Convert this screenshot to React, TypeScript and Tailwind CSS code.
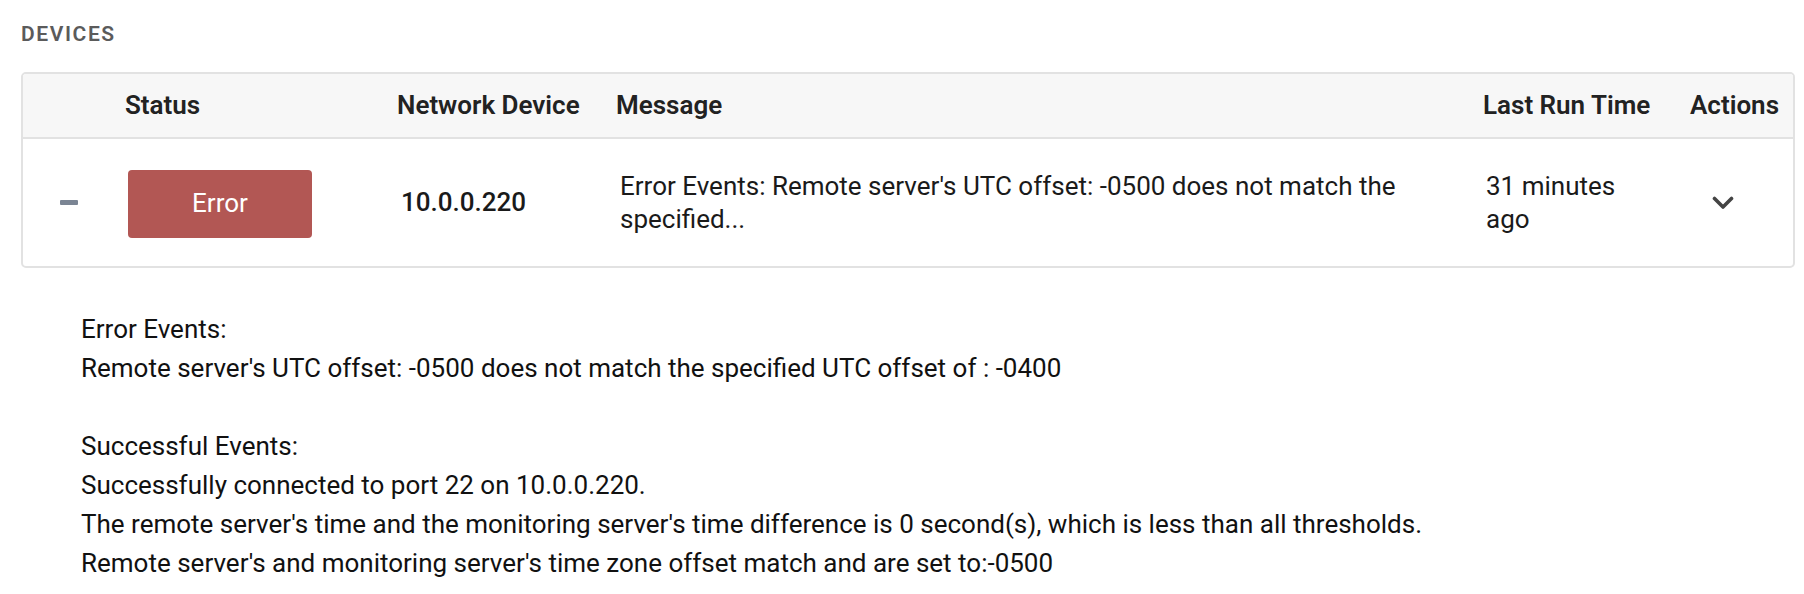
import React from "react";

type Device = {
  status: string;
  address: string;
  message: string;
  lastRun: string;
};

const device: Device = {
  status: "Error",
  address: "10.0.0.220",
  message: "Error Events: Remote server's UTC offset: -0500 does not match the specified...",
  lastRun: "31 minutes ago",
};

const detailLines = [
  "Error Events:",
  "Remote server's UTC offset: -0500 does not match the specified UTC offset of : -0400",
  "",
  "Successful Events:",
  "Successfully connected to port 22 on 10.0.0.220.",
  "The remote server's time and the monitoring server's time difference is 0 second(s), which is less than all thresholds.",
  "Remote server's and monitoring server's time zone offset match and are set to:-0500",
];

const cols = "grid grid-cols-[87px_272px_219px_867px_207px_1fr]";

function ChevronDown() {
  return (
    <svg width="22" height="14" viewBox="0 0 22 14" fill="none" aria-hidden="true">
      <path d="M2.5 2.5 L11 11 L19.5 2.5" stroke="#444444" strokeWidth="3.6" strokeLinecap="round" strokeLinejoin="round" />
    </svg>
  );
}

export default function App() {
  return (
    <div className="w-[1804px] h-[594px] bg-white px-[21px] pt-[22px] text-[#1f1f1f] font-['Roboto',sans-serif]">
      <h2 className="text-[21px] leading-[24px] font-semibold tracking-[1.6px] text-[#5b5b5b]">DEVICES</h2>

      <div className="mt-[26px] w-[1774px] border-2 border-[#e2e2e2] rounded-[5px] overflow-hidden">
        <div className={`${cols} h-[65px] items-center bg-[#f7f7f7] border-b-2 border-[#e2e2e2] text-[26px] font-semibold text-[#222]`}>
          <div />
          <div className="pl-[15px]">Status</div>
          <div className="pl-[15px]">Network Device</div>
          <div className="pl-[15px]">Message</div>
          <div className="pl-[15px]">Last Run Time</div>
          <div className="pl-[15px]">Actions</div>
        </div>

        <div className={`${cols} h-[127px] items-center text-[26px] text-[#1a1a1a]`}>
          <div className="flex justify-center pl-[4px]">
            <span className="block w-[18px] h-[5px] rounded-[1px] bg-[#7b8594]" />
          </div>
          <div className="pl-[18px] pt-[2px]">
            <span className="flex items-center justify-center w-[184px] h-[68px] rounded-[4px] bg-[#b25754] text-white">
              {device.status}
            </span>
          </div>
          <div className="pl-[19px] font-medium">{device.address}</div>
          <div className="pl-[19px] pr-[40px] leading-[33px]">{device.message}</div>
          <div className="pl-[18px] leading-[33px] w-[180px]">{device.lastRun}</div>
          <div className="pl-[37px]">
            <ChevronDown />
          </div>
        </div>
      </div>

      <div className="pl-[60px] pt-[42px] text-[26px] leading-[39px] text-[#111]">
        {detailLines.map((line, i) => (
          <div key={i} className="h-[39px]">
            {line}
          </div>
        ))}
      </div>
    </div>
  );
}
